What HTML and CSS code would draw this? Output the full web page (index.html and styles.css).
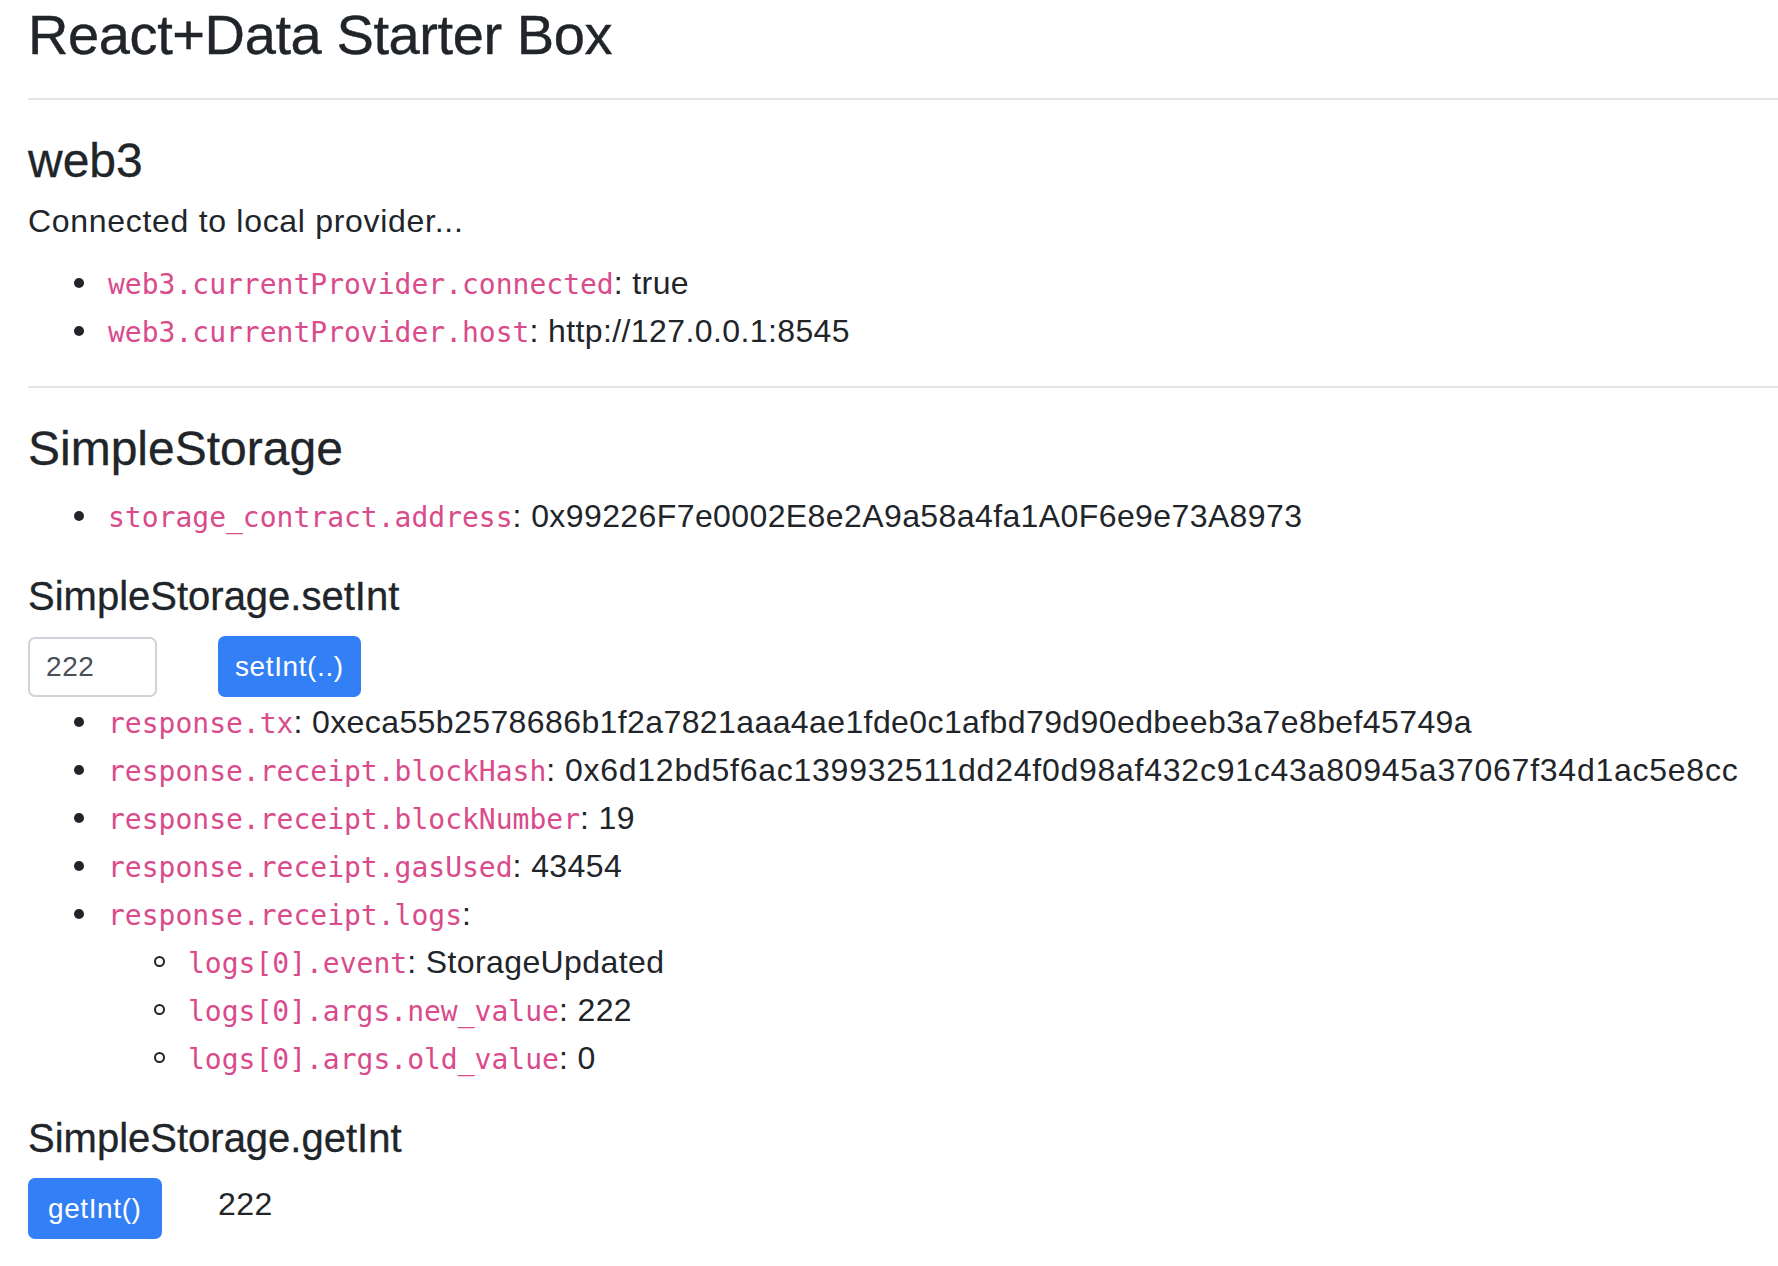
FILE: index.html
```html
<!DOCTYPE html>
<html lang="en">
<head>
<meta charset="utf-8">
<title>React+Data Starter Box</title>
<link rel="stylesheet" href="styles.css">
</head>
<body>
<div class="page">
  <h3 class="title">React+Data Starter Box</h3>
  <hr class="rule">
  <h4 class="section-title">web3</h4>
  <p class="status">Connected to local provider...</p>
  <ul class="props">
    <li><code>web3.currentProvider.connected</code>: true</li>
    <li><code>web3.currentProvider.host</code>: http://127.0.0.1:8545</li>
  </ul>
  <hr class="rule rule-second">
  <h4 class="section-title">SimpleStorage</h4>
  <ul class="props">
    <li><code>storage_contract.address</code>: 0x99226F7e0002E8e2A9a58a4fa1A0F6e9e73A8973</li>
  </ul>
  <h5 class="method-title">SimpleStorage.setInt</h5>
  <div class="action-row">
    <input class="field" type="text" value="222">
    <button class="btn" type="button">setInt(..)</button>
  </div>
  <ul class="props props-tight">
    <li><code>response.tx</code>: 0xeca55b2578686b1f2a7821aaa4ae1fde0c1afbd79d90edbeeb3a7e8bef45749a</li>
    <li><code>response.receipt.blockHash</code>: <span class="hash">0x6d12bd5f6ac139932511dd24f0d98af432c91c43a80945a37067f34d1ac5e8cc</span></li>
    <li><code>response.receipt.blockNumber</code>: 19</li>
    <li><code>response.receipt.gasUsed</code>: 43454</li>
    <li><code>response.receipt.logs</code>:
      <ul class="sub-props">
        <li><code>logs[0].event</code>: StorageUpdated</li>
        <li><code>logs[0].args.new_value</code>: 222</li>
        <li><code>logs[0].args.old_value</code>: 0</li>
      </ul>
    </li>
  </ul>
  <h5 class="method-title method-title-get">SimpleStorage.getInt</h5>
  <div class="action-row action-row-get">
    <button class="btn btn-get" type="button">getInt()</button>
    <span class="result">222</span>
  </div>
</div>
</body>
</html>
```
FILE: styles.css
```css
html, body {
  margin: 0;
  padding: 0;
  background: #ffffff;
}

body {
  font-family: "Liberation Sans", Arial, sans-serif;
  color: #212529;
  font-size: 32px;
  line-height: 48px;
}

.page {
  padding: 1px 0 0 28px;
}

.title {
  margin: 0;
  font-size: 56px;
  line-height: 67px;
  font-weight: 400;
  letter-spacing: -0.4px;
  -webkit-text-stroke: 0.4px #212529;
}

.rule {
  margin: 30px 0 32px;
  height: 0;
  border: 0;
  border-top: 2px solid #e5e5e5;
}

.rule-second {
  margin-top: 31px;
}

.section-title {
  margin: 0;
  font-size: 48px;
  line-height: 58px;
  font-weight: 400;
  -webkit-text-stroke: 0.3px #212529;
}

.status {
  margin: 7px 0 0;
  letter-spacing: 0.7px;
}

.props {
  margin: 14px 0 0;
  padding-left: 80px;
  list-style: none;
  letter-spacing: 0.4px;
}

.props li {
  line-height: 48px;
}

.props > li::before {
  content: "";
  display: inline-block;
  width: 10px;
  height: 10px;
  margin-left: -34px;
  margin-right: 24px;
  border-radius: 50%;
  background: #212529;
  vertical-align: 6px;
}

.props-tight {
  margin-top: 1px;
}

.hash {
  letter-spacing: 0.75px;
}

.sub-props {
  margin: 0;
  padding-left: 80px;
  list-style: none;
}

.sub-props > li::before {
  content: "";
  display: inline-block;
  box-sizing: border-box;
  width: 11px;
  height: 11px;
  margin-left: -34px;
  margin-right: 23px;
  border: 2px solid #212529;
  border-radius: 50%;
  vertical-align: 6px;
}

code {
  font-family: "DejaVu Sans Mono", "Liberation Mono", monospace;
  font-size: 28px;
  line-height: 1;
  color: #d94b8b;
  letter-spacing: 0;
}

.method-title {
  margin: 32px 0 0;
  font-size: 40px;
  line-height: 48px;
  font-weight: 400;
  -webkit-text-stroke: 0.3px #212529;
}

.method-title-get {
  margin-top: 32px;
}

.action-row {
  margin-top: 16px;
  display: grid;
  grid-template-columns: 190px auto;
  align-items: center;
  justify-items: start;
  height: 61px;
}

.action-row-get {
  margin-top: 16px;
  align-items: start;
}

.field {
  box-sizing: border-box;
  width: 129px;
  height: 60px;
  margin: 1px 0 0;
  padding: 0 16px;
  border: 2px solid #ced4da;
  border-radius: 7px;
  font-family: "Liberation Sans", Arial, sans-serif;
  font-size: 28px;
  letter-spacing: 0.6px;
  color: #495057;
  background: #ffffff;
  outline: none;
}

.btn {
  box-sizing: border-box;
  height: 61px;
  margin: 0;
  padding: 0 17px;
  border: 0;
  border-radius: 7px;
  background: #3380f6;
  color: #ffffff;
  font-family: "Liberation Sans", Arial, sans-serif;
  font-size: 28px;
  line-height: 61px;
  letter-spacing: 0.6px;
  cursor: pointer;
}

.btn-get {
  padding: 0 20px;
}

.result {
  padding-top: 2px;
  line-height: 48px;
  letter-spacing: 0.5px;
}
```
